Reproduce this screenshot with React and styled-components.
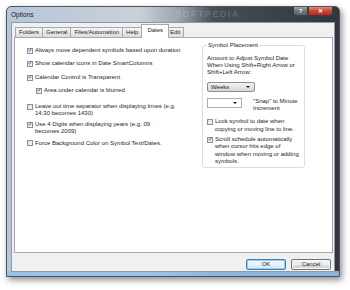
import React from "react";
import styled, { createGlobalStyle } from "styled-components";

const GlobalStyle = createGlobalStyle`
  body {
    margin: 0;
    background: #fff;
    font-family: "Liberation Sans", Arial, sans-serif;
    color: #1e1e1e;
  }
`;

const Stage = styled.div`
  width: 350px;
  height: 290px;
  padding: 6px 0 0 6px;
  box-sizing: border-box;
`;

const Window = styled.div`
  width: 334px;
  height: 271px;
  box-sizing: border-box;
  display: flex;
  flex-direction: column;
  border: 1px solid #4e555d;
  border-radius: 5px 5px 0 0;
  padding: 0 4px 4px 4px;
  background: linear-gradient(
      180deg,
      rgba(0, 0, 0, 0) calc(100% - 5px),
      rgba(150, 192, 238, 0.9) calc(100% - 5px)
    ),
    linear-gradient(
      90deg,
      #b7c7da 0%,
      #c9d0d8 40%,
      #9aa2ac 52%,
      #474e56 62%,
      #30363c 100%
    );
  box-shadow: 2px 3px 6px rgba(0, 0, 0, 0.45);
`;

const TitleBar = styled.div`
  height: 15px;
  display: flex;
  align-items: flex-start;
`;

const Title = styled.div`
  width: 164px;
  font-size: 6.5px;
  line-height: 15px;
  color: #1a1a1a;
`;

const Watermark = styled.div`
  font-size: 9px;
  line-height: 15px;
  font-weight: bold;
  letter-spacing: 1.5px;
  color: rgba(255, 255, 255, 0.16);
  filter: blur(0.6px);
`;

const Controls = styled.div`
  margin-left: auto;
  margin-right: 2px;
  display: flex;
`;

const CaptionButton = styled.div`
  width: ${(p) => (p.close ? 25 : 15)}px;
  height: 9px;
  box-sizing: border-box;
  border: 1px solid #3a3f45;
  border-top: none;
  border-radius: ${(p) => (p.close ? "0 0 3px 0" : "0 0 0 3px")};
  background: ${(p) =>
    p.close
      ? "linear-gradient(180deg, #e28a7c 0%, #c9452f 50%, #b72a14 100%)"
      : "linear-gradient(180deg, #9ba2aa 0%, #6c747d 50%, #5b626a 100%)"};
  color: #fff;
  font-size: 6px;
  font-weight: bold;
  line-height: 8px;
  text-align: center;
`;

const Client = styled.div`
  flex: 1;
  display: flex;
  flex-direction: column;
  background: #f0f0f0;
  border: 1px solid #8d9aa8;
  padding: 2px 1px 0 2px;
`;

const TabRow = styled.div`
  height: 13px;
  display: flex;
  align-items: flex-end;
  padding-left: 1px;
  margin-bottom: -1px;
  position: relative;
  z-index: 1;
`;

const Tab = styled.div`
  height: ${(p) => (p.active ? 14 : 11)}px;
  box-sizing: border-box;
  padding: 0 ${(p) => (p.active ? 5 : 3)}px;
  margin: 0 ${(p) => (p.active ? -2 : 0)}px 0 -1px;
  border: 1px solid #a5a9ae;
  border-bottom: ${(p) => (p.active ? "none" : "1px solid #a5a9ae")};
  background: ${(p) =>
    p.active ? "#fff" : "linear-gradient(180deg, #f6f6f6 0%, #e9e9e9 50%, #dcdcdc 100%)"};
  font-size: 6px;
  line-height: ${(p) => (p.active ? 11 : 9)}px;
  white-space: nowrap;
  position: relative;
  z-index: ${(p) => (p.active ? 2 : 1)};
  &:first-child {
    margin-left: 0;
  }
`;

const Panel = styled.div`
  flex: 1;
  display: flex;
  background: #fff;
  border: 1px solid #a5a9ae;
  padding: 4px 0 0 12px;
`;

const LeftCol = styled.div`
  width: 175px;
  padding-top: 5px;
  display: flex;
  flex-direction: column;
`;

const Row = styled.div`
  display: flex;
  align-items: flex-start;
  gap: 2px;
  margin-top: ${(p) => p.gap || 0}px;
  margin-left: ${(p) => (p.indent ? 9 : 0)}px;
  font-size: 6px;
  line-height: ${(p) => p.lh || 7}px;
  white-space: nowrap;
`;

const Box = styled.div`
  flex: none;
  width: 6px;
  height: 6px;
  margin-top: 0.5px;
  box-sizing: border-box;
  border: 1px solid #8e8f8f;
  background: linear-gradient(135deg, #dcdcdc 0%, #f6f6f6 100%);
  display: flex;
  align-items: center;
  justify-content: center;
`;

const Check = () => (
  <svg width="6" height="6" viewBox="0 0 6 6" style={{ marginTop: -1 }}>
    <path d="M1 3.2 L2.4 4.8 L5 0.8" fill="none" stroke="#2a4d9c" strokeWidth="1.1" />
  </svg>
);

const CheckBox = ({ checked }) => <Box>{checked && <Check />}</Box>;

const Group = styled.fieldset`
  width: 103px;
  height: 126px;
  box-sizing: border-box;
  margin: 0 0 0 0;
  padding: 0 4px 0 4px;
  border: 1px solid #d5dfe5;
  border-radius: 3px;
`;

const Legend = styled.legend`
  font-size: 6px;
  line-height: 7px;
  padding: 0 1px;
  margin-left: 0;
`;

const Text = styled.div`
  font-size: 6px;
  line-height: ${(p) => p.lh || 7}px;
  margin-top: ${(p) => p.gap || 0}px;
  white-space: nowrap;
`;

const Combo = styled.div`
  width: ${(p) => p.w}px;
  height: 10px;
  box-sizing: border-box;
  margin-top: ${(p) => p.gap || 0}px;
  display: flex;
  align-items: center;
  justify-content: space-between;
  padding: 0 4px 0 3px;
  border: 1px solid ${(p) => (p.button ? "#8e8f8f" : "#abadb3")};
  border-radius: ${(p) => (p.button ? 2 : 0)}px;
  background: ${(p) =>
    p.button ? "linear-gradient(180deg, #f2f2f2 0%, #e6e6e6 50%, #d6d6d6 100%)" : "#fff"};
  font-size: 6px;
  line-height: 8px;
  flex: none;
`;

const Arrow = styled.span`
  width: 0;
  height: 0;
  border-left: 2px solid transparent;
  border-right: 2px solid transparent;
  border-top: 2.5px solid #1a1a1a;
`;

const SnapRow = styled.div`
  display: flex;
  align-items: flex-start;
  gap: 11px;
  margin-top: 6px;
`;

const Footer = styled.div`
  display: flex;
  justify-content: flex-end;
  gap: 5px;
  padding: 6px 2px 1px 0;
`;

const Button = styled.div`
  width: 40px;
  height: 11px;
  box-sizing: border-box;
  border: 1px solid ${(p) => (p.primary ? "#3c7fb1" : "#707070")};
  border-radius: 2px;
  background: ${(p) =>
    p.primary
      ? "linear-gradient(180deg, #f4f9fd 0%, #e6f1fb 50%, #d7e9f8 100%)"
      : "linear-gradient(180deg, #f2f2f2 0%, #ebebeb 50%, #dddddd 51%, #cfcfcf 100%)"};
  box-shadow: ${(p) => (p.primary ? "inset 0 0 0 1px #8fd0f4" : "inset 0 0 0 1px #fafafa")};
  font-size: 6px;
  line-height: 9px;
  text-align: center;
`;

const tabs = ["Folders", "General", "Files/Automation", "Help", "Dates", "Edit"];

export default function App() {
  return (
    <Stage>
      <GlobalStyle />
      <Window>
        <TitleBar>
          <Title>Options</Title>
          <Watermark>SOFTPEDIA</Watermark>
          <Controls>
            <CaptionButton>?</CaptionButton>
            <CaptionButton close>✕</CaptionButton>
          </Controls>
        </TitleBar>
        <Client>
          <TabRow>
            {tabs.map((t) => (
              <Tab key={t} active={t === "Dates"}>
                {t}
              </Tab>
            ))}
          </TabRow>
          <Panel>
            <LeftCol>
              <Row>
                <CheckBox checked />
                <span>Always move dependent symbols based upon duration</span>
              </Row>
              <Row gap={6}>
                <CheckBox checked />
                <span>Show calendar icons in Date SmartColumns</span>
              </Row>
              <Row gap={7}>
                <CheckBox checked />
                <span>Calendar Control is Transparent</span>
              </Row>
              <Row gap={6} indent>
                <CheckBox checked />
                <span>Area under calendar is blurred</span>
              </Row>
              <Row gap={9} lh={6.6}>
                <CheckBox />
                <span>
                  Leave out time separator when displaying times (e.g.
                  <br />
                  14:30 becomes 1430)
                </span>
              </Row>
              <Row gap={5} lh={6.8}>
                <CheckBox checked />
                <span>
                  Use 4 Digits when displaying years (e.g. 09
                  <br />
                  becomes 2009)
                </span>
              </Row>
              <Row gap={5}>
                <CheckBox />
                <span>Force Background Color on Symbol Text/Dates.</span>
              </Row>
            </LeftCol>
            <Group>
              <Legend>Symbol Placement</Legend>
              <Text gap={6}>
                Amount to Adjust Symbol Date
                <br />
                When Using Shift+Right Arrow or
                <br />
                Shift+Left Arrow:
              </Text>
              <Combo button w={48} gap={6}>
                <span>Weeks</span>
                <Arrow />
              </Combo>
              <SnapRow>
                <Combo w={35}>
                  <span />
                  <Arrow />
                </Combo>
                <Text lh={6.5}>
                  "Snap" to Minute
                  <br />
                  Increment
                </Text>
              </SnapRow>
              <Row gap={7} lh={7.5}>
                <CheckBox />
                <span>
                  Lock symbol to date when
                  <br />
                  copying or moving line to line.
                </span>
              </Row>
              <Row gap={3} lh={7.3}>
                <CheckBox checked />
                <span>
                  Scroll schedule automatically
                  <br />
                  when cursor hits edge of
                  <br />
                  window when moving or adding
                  <br />
                  symbols.
                </span>
              </Row>
            </Group>
          </Panel>
          <Footer>
            <Button primary>OK</Button>
            <Button>Cancel</Button>
          </Footer>
        </Client>
      </Window>
    </Stage>
  );
}
